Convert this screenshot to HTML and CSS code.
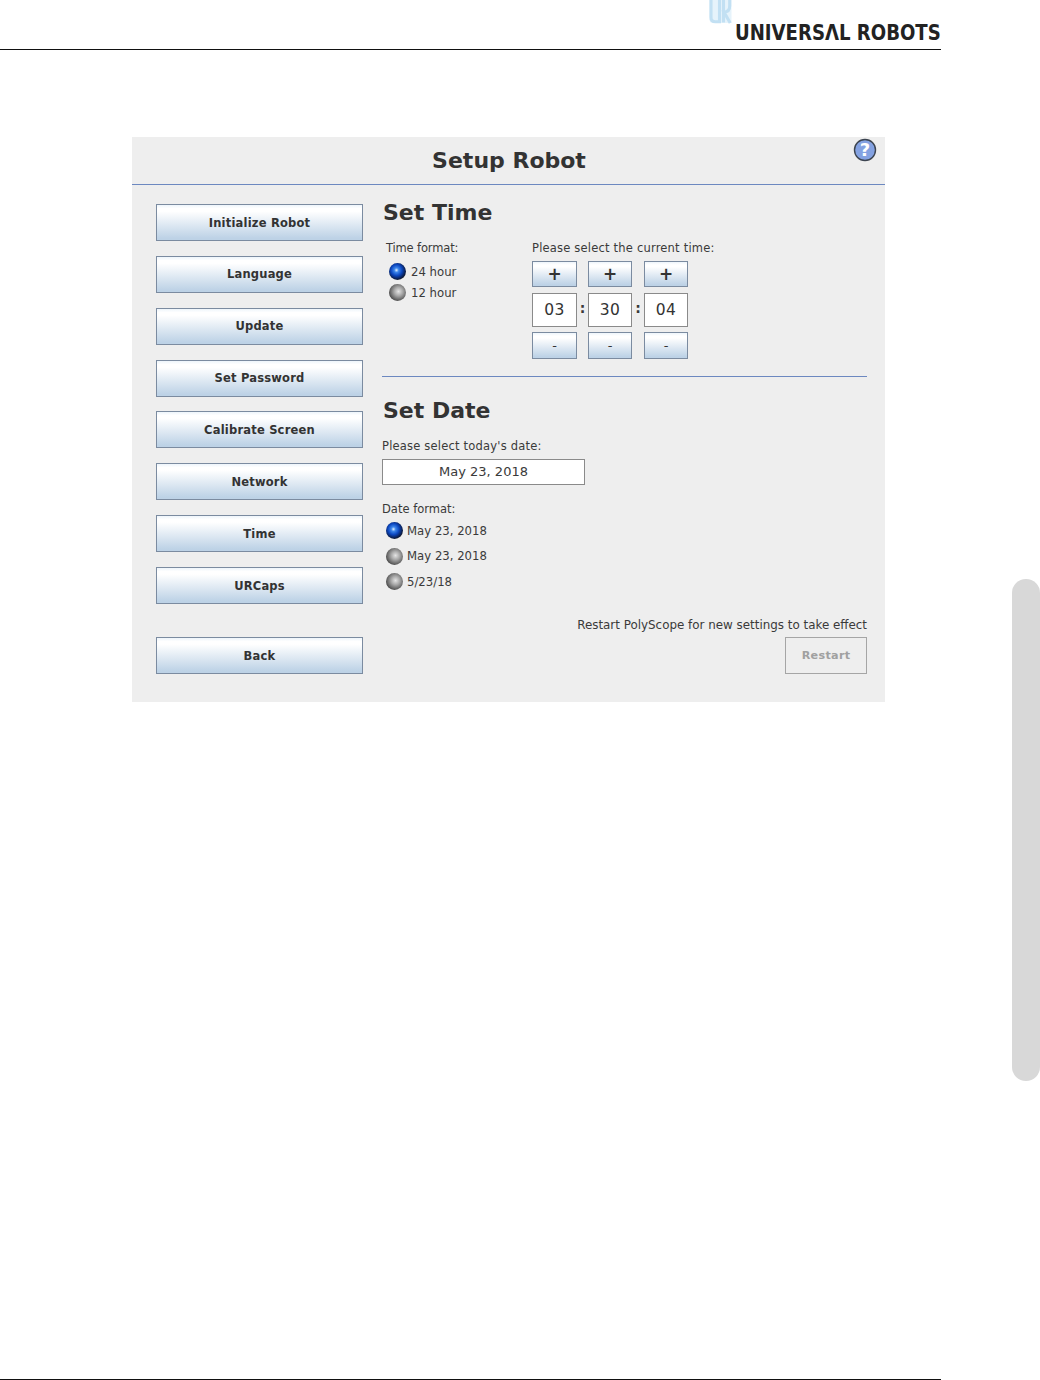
FILE: index.html
```html
<!DOCTYPE html>
<html lang="en">
<head>
<meta charset="utf-8">
<title>Setup Robot</title>
<link rel="stylesheet" href="styles.css">
</head>
<body>
<div class="page">
  <header class="header">
    <svg class="logo-mark" width="23" height="24" viewBox="0 0 23 24" fill="none" stroke="#c2e0f3" stroke-width="3.1" aria-hidden="true">
      <path d="M0.5 0H22.5V23H4Q0.5 23 0.5 19.5Z" fill="#e6f3fb" stroke="none"/>
      <path d="M2 0V17.5Q2 21.7 6.5 21.7H10.5V0"/>
      <path d="M14.5 0V22.5"/>
      <path d="M20.7 0V6Q20.7 12 15 12L21.2 23"/>
    </svg>
    <div class="logo-text">UNIVERSΛL ROBOTS</div>
  </header>

  <section class="panel">
    <div class="panel-title">
      <h1 class="title">Setup Robot</h1>
      <svg class="help" width="24" height="24" viewBox="0 0 24 24" aria-hidden="true">
        <circle cx="12" cy="12" r="10.5" fill="#84a2e2" stroke="#3c4450" stroke-width="1.4"/>
        <text x="12" y="18" text-anchor="middle" class="help-mark">?</text>
      </svg>
    </div>
    <div class="panel-body">
      <nav class="sidebar">
        <button class="btn">Initialize Robot</button>
        <button class="btn">Language</button>
        <button class="btn">Update</button>
        <button class="btn">Set Password</button>
        <button class="btn">Calibrate Screen</button>
        <button class="btn">Network</button>
        <button class="btn">Time</button>
        <button class="btn">URCaps</button>
        <button class="btn btn-back">Back</button>
      </nav>
      <main class="main">
        <h2 class="heading">Set Time</h2>
        <div class="time-row">
          <div class="time-format">
            <div class="label label-tight">Time format:</div>
            <div class="radio-row tight"><span class="radio on"></span><span class="opt">24 hour</span></div>
            <div class="radio-row tight"><span class="radio"></span><span class="opt">12 hour</span></div>
          </div>
          <div class="time-picker">
            <div class="label">Please select the current time:</div>
            <div class="picker">
              <button class="step c1 plus">+</button>
              <button class="step c3 plus">+</button>
              <button class="step c5 plus">+</button>
              <div class="field c1">03</div>
              <div class="colon c2">:</div>
              <div class="field c3">30</div>
              <div class="colon c4">:</div>
              <div class="field c5">04</div>
              <button class="step c1">-</button>
              <button class="step c3">-</button>
              <button class="step c5">-</button>
            </div>
          </div>
        </div>
        <hr class="divider">
        <h2 class="heading">Set Date</h2>
        <div class="label date-label">Please select today's date:</div>
        <div class="date-field">May 23, 2018</div>
        <div class="label label-tight format-label">Date format:</div>
        <div class="date-options">
          <div class="radio-row wide"><span class="radio on"></span><span class="opt">May 23, 2018</span></div>
          <div class="radio-row wide"><span class="radio"></span><span class="opt">May 23, 2018</span></div>
          <div class="radio-row wide"><span class="radio"></span><span class="opt">5/23/18</span></div>
        </div>
        <div class="restart-note">Restart PolyScope for new settings to take effect</div>
        <button class="restart">Restart</button>
      </main>
    </div>
  </section>

  <footer class="footer"></footer>
</div>
<div class="scroll-thumb"></div>
</body>
</html>
```

FILE: styles.css
```css
* { box-sizing: border-box; }
html, body { margin: 0; padding: 0; background: #fff; }
body {
  width: 1040px;
  height: 1380px;
  overflow: hidden;
  font-family: "DejaVu Sans", sans-serif;
  color: #3a3a3a;
}
.page {
  width: 941px;
  height: 1380px;
  display: flex;
  flex-direction: column;
}
.header {
  height: 50px;
  flex: none;
  border-bottom: 1px solid #111;
  display: flex;
  justify-content: flex-end;
  gap: 3px;
}
.logo-mark { flex: none; }
.logo-text {
  align-self: flex-end;
  width: 206px;
  height: 21px;
  margin-bottom: 6px;
  font-family: "DejaVu Sans Condensed", "DejaVu Sans", sans-serif;
  font-weight: 700;
  font-size: 22px;
  line-height: 21px;
  color: #222;
  white-space: nowrap;
  transform: scaleX(0.915);
  transform-origin: left center;
}
.panel {
  width: 753px;
  height: 565px;
  flex: none;
  margin: 87px 0 0 132px;
  background: #eee;
}
.panel-title {
  position: relative;
  height: 48px;
  padding-left: 1px;
  border-bottom: 1px solid #6c88c0;
  display: flex;
  align-items: center;
  justify-content: center;
}
.title {
  margin: 0;
  font-size: 22px;
  font-weight: 700;
  color: #333;
}
.help { position: absolute; left: 721px; top: 1px; }
.help-mark { font-family: "DejaVu Sans", sans-serif; font-size: 18px; font-weight: 700; fill: #fff; }
.panel-body { display: flex; gap: 19px; padding-left: 24px; }
.sidebar {
  width: 207px;
  padding-top: 19px;
  display: flex;
  flex-direction: column;
  gap: 14.86px;
}
.btn {
  width: 207px;
  height: 37px;
  flex: none;
  padding: 0;
  border: 1px solid #7b8ba0;
  background: linear-gradient(#eef5fb 0, #fff 10%, #fff 18%, #bdd2e6 95%);
  font-family: inherit;
  font-size: 11.5px;
  font-weight: 700;
  letter-spacing: 0.2px;
  color: #333;
}
.btn-back { margin-top: 18.14px; }
.main { width: 485px; padding-top: 14px; }
.heading {
  margin: 0;
  height: 27px;
  padding-left: 1px;
  font-size: 22px;
  line-height: 27px;
  font-weight: 700;
  color: #333;
}
.label {
  height: 16px;
  font-size: 11.5px;
  line-height: 16px;
  letter-spacing: 0.2px;
  white-space: nowrap;
}
.label-tight { letter-spacing: 0; }
.time-row { display: flex; margin-top: 14px; }
.time-format { width: 150px; padding-left: 4px; }
.time-format .label { margin-bottom: 5px; letter-spacing: -0.15px; }
.time-picker .label { margin-bottom: 5px; }
.radio-row { display: flex; align-items: center; }
.radio-row.tight { height: 21px; padding-left: 3px; gap: 5px; }
.radio-row.wide { height: 25.5px; padding-left: 4px; gap: 4px; }
.radio {
  width: 17px;
  height: 17px;
  flex: none;
  border-radius: 50%;
  background: radial-gradient(circle at 56% 44%, #e4e4e4 0, #a8a8a8 32%, #5c5c5c 66%, #4a4a4a 72%, #d0d0d0 94%);
}
.radio.on {
  background: radial-gradient(circle at 44% 42%, #e4f2ff 0, #3d86ea 16%, #0c47c0 40%, #0a1c48 66%, #20242c 74%, #b4b4b4 96%);
}
.opt { font-size: 11.7px; white-space: nowrap; }
.picker {
  display: grid;
  grid-template-columns: 45px 11px 44px 12px 44px;
  grid-template-rows: 26px 34px 27px;
  row-gap: 5.5px;
}
.c1 { grid-column: 1; }
.c2 { grid-column: 2; }
.c3 { grid-column: 3; }
.c4 { grid-column: 4; }
.c5 { grid-column: 5; }
.step {
  padding: 0;
  border: 1px solid #7b8ba0;
  background: linear-gradient(#eef5fb 0, #fff 12%, #fff 20%, #bdd2e6 95%);
  font-family: inherit;
  font-size: 13px;
  color: #333;
}
.step.plus { font-size: 17px; font-weight: 700; line-height: 1; }
.picker .step:nth-child(-n+3) { grid-row: 1; }
.picker .field, .picker .colon { grid-row: 2; }
.picker .step:nth-child(n+9) { grid-row: 3; }
.field {
  display: flex;
  align-items: center;
  justify-content: center;
  background: #fff;
  border: 1px solid #8a8a8a;
  font-size: 15.5px;
  letter-spacing: 0.4px;
  color: #333;
}
.colon {
  display: flex;
  justify-content: center;
  align-items: center;
  font-size: 14px;
  font-weight: 700;
  padding-bottom: 4px;
}
.divider {
  margin: 17px 0 20px;
  height: 1px;
  border: 0;
  background: #6c88c0;
}
.date-label { margin-top: 14px; }
.date-field {
  width: 203px;
  height: 26px;
  margin-top: 5px;
  padding-bottom: 2px;
  display: flex;
  align-items: center;
  justify-content: center;
  background: #fff;
  border: 1px solid #8a8a8a;
  font-size: 13px;
}
.format-label { margin-top: 16px; }
.date-options { margin-top: 1px; }
.restart-note {
  margin-top: 22.5px;
  height: 16px;
  font-size: 11.9px;
  line-height: 16px;
  text-align: right;
  white-space: nowrap;
}
.restart {
  display: block;
  width: 82px;
  height: 37px;
  margin: 4px 0 0 auto;
  padding: 0;
  background: #eee;
  border: 1px solid #a5a5a5;
  font-family: inherit;
  font-size: 11.2px;
  font-weight: 700;
  letter-spacing: 0.3px;
  color: #a0a0a0;
}
.footer {
  margin-top: auto;
  height: 1px;
  flex: none;
  background: #111;
}
.scroll-thumb {
  position: absolute;
  left: 1012px;
  top: 579px;
  width: 28px;
  height: 502px;
  border-radius: 14px;
  background: #d8d8d8;
}
```
